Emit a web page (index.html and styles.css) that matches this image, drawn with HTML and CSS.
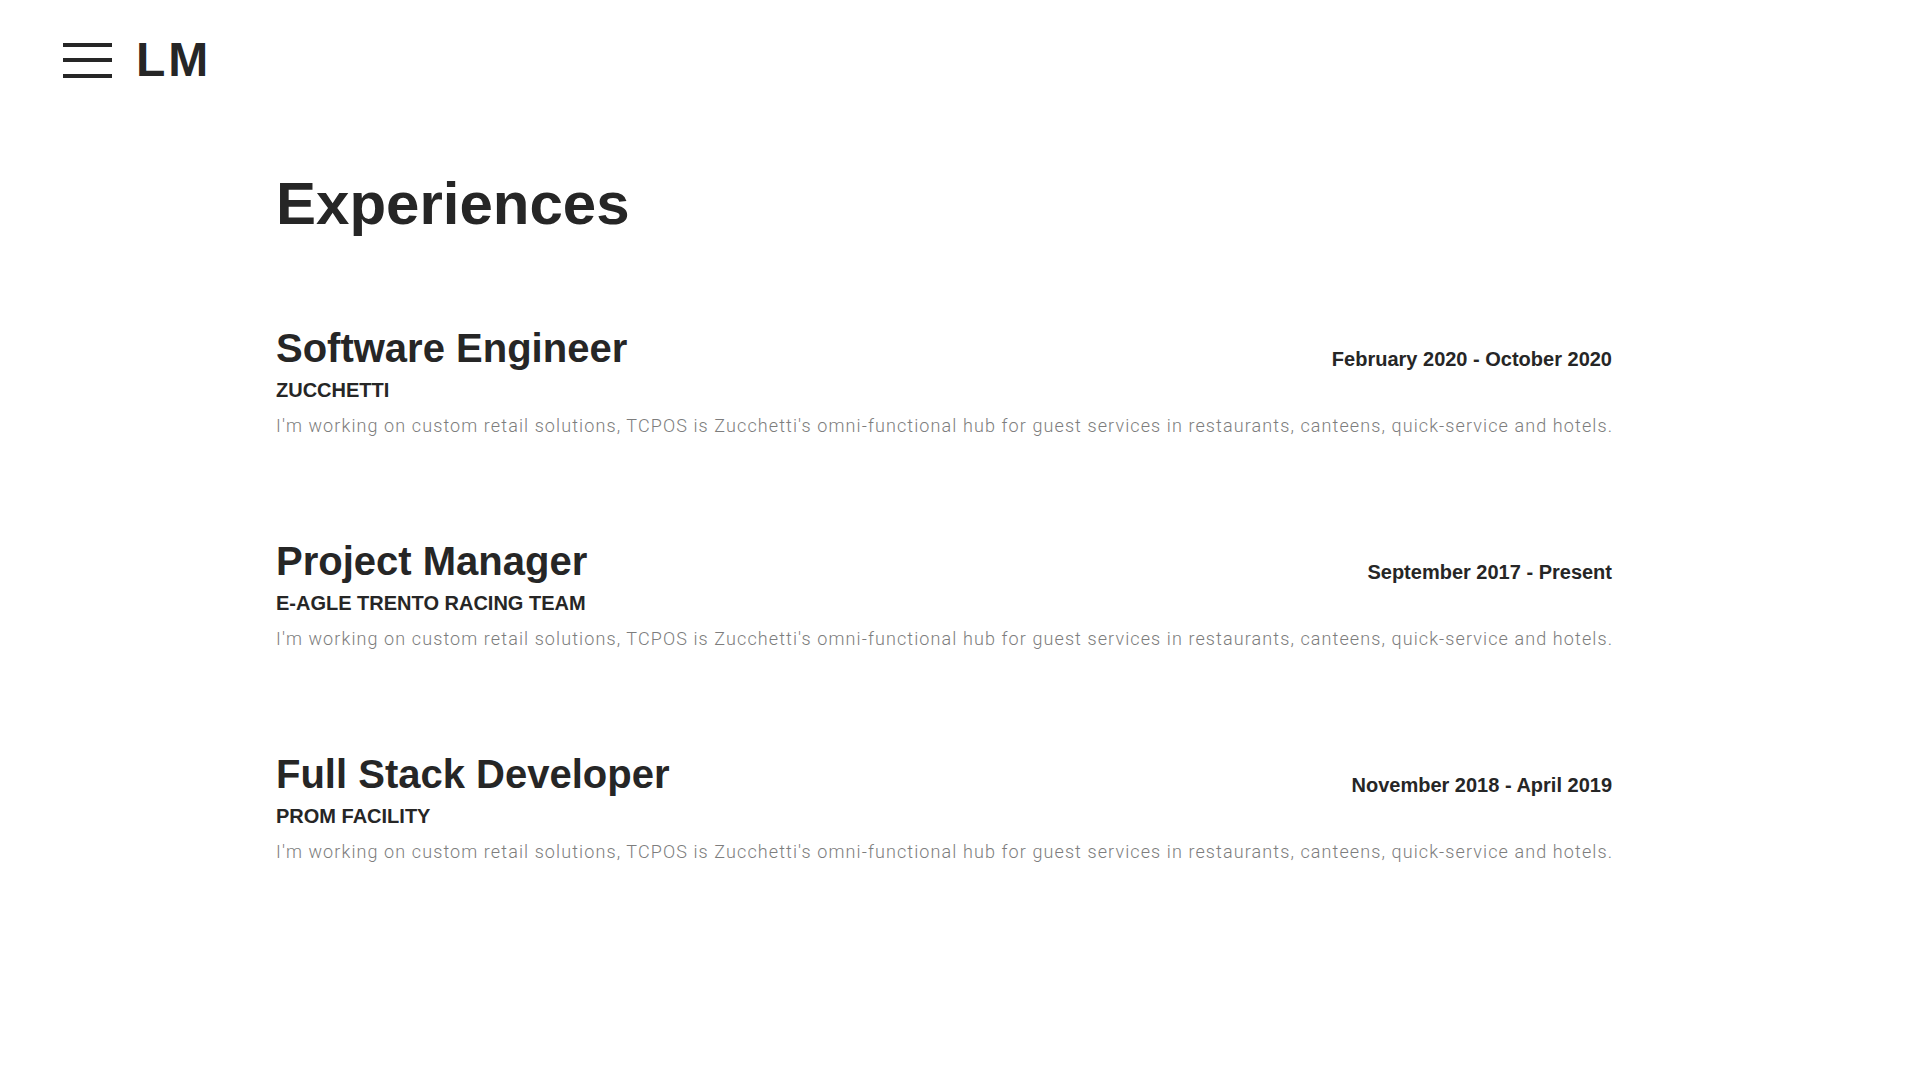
FILE: index.html
```html
<!DOCTYPE html>
<html lang="en">
<head>
<meta charset="utf-8">
<title>Experiences</title>
<link rel="stylesheet" href="styles.css">
</head>
<body>
<header class="topbar">
  <button class="menu-btn" aria-label="Menu">
    <span class="bar"></span><span class="bar"></span><span class="bar"></span>
  </button>
  <div class="logo">LM</div>
</header>
<main class="content">
  <h1 class="page-title">Experiences</h1>
  <section class="job">
    <div class="job-head">
      <h2 class="job-title">Software Engineer</h2>
      <span class="job-date">February 2020 - October 2020</span>
    </div>
    <div class="job-company">ZUCCHETTI</div>
    <p class="job-desc">I'm working on custom retail solutions, TCPOS is Zucchetti's omni-functional hub for guest services in restaurants, canteens, quick-service and hotels.</p>
  </section>
  <section class="job">
    <div class="job-head">
      <h2 class="job-title">Project Manager</h2>
      <span class="job-date">September 2017 - Present</span>
    </div>
    <div class="job-company">E-AGLE TRENTO RACING TEAM</div>
    <p class="job-desc">I'm working on custom retail solutions, TCPOS is Zucchetti's omni-functional hub for guest services in restaurants, canteens, quick-service and hotels.</p>
  </section>
  <section class="job">
    <div class="job-head">
      <h2 class="job-title">Full Stack Developer</h2>
      <span class="job-date">November 2018 - April 2019</span>
    </div>
    <div class="job-company">PROM FACILITY</div>
    <p class="job-desc">I'm working on custom retail solutions, TCPOS is Zucchetti's omni-functional hub for guest services in restaurants, canteens, quick-service and hotels.</p>
  </section>
</main>
</body>
</html>
```

FILE: styles.css
```css
* { box-sizing: border-box; }
html, body {
  margin: 0;
  padding: 0;
  background: #ffffff;
  color: #262626;
  font-family: "Liberation Sans", Arial, Helvetica, sans-serif;
}
.topbar {
  display: flex;
  align-items: center;
  gap: 24px;
  padding: 36px 0 0 63px;
}
.menu-btn {
  display: flex;
  flex-direction: column;
  justify-content: space-between;
  width: 49px;
  height: 35px;
  padding: 0;
  margin: 0;
  border: 0;
  background: none;
  cursor: pointer;
}
.menu-btn .bar {
  display: block;
  height: 4px;
  background: #262626;
}
.logo {
  font-size: 48px;
  font-weight: 700;
  line-height: 48px;
  letter-spacing: 3px;
}
.content {
  width: 1336px;
  margin-left: 276px;
  padding-top: 85px;
}
.page-title {
  margin: 0 0 86px;
  font-size: 60px;
  font-weight: 700;
  line-height: 70px;
}
.job + .job {
  margin-top: 101px;
}
.job-head {
  display: flex;
  justify-content: space-between;
  align-items: flex-end;
}
.job-title {
  margin: 0;
  font-size: 40px;
  font-weight: 700;
  line-height: 46px;
}
.job-date {
  font-size: 20px;
  font-weight: 700;
  line-height: 24px;
}
.job-company {
  margin-top: 7px;
  font-size: 20px;
  font-weight: 700;
  line-height: 24px;
}
.job-desc {
  margin: 13px 0 0;
  font-family: Roboto, "Liberation Sans", Arial, sans-serif;
  font-size: 18px;
  font-weight: 300;
  line-height: 22px;
  color: #7d7d7d;
  letter-spacing: 1.1px;
  white-space: nowrap;
}
```
